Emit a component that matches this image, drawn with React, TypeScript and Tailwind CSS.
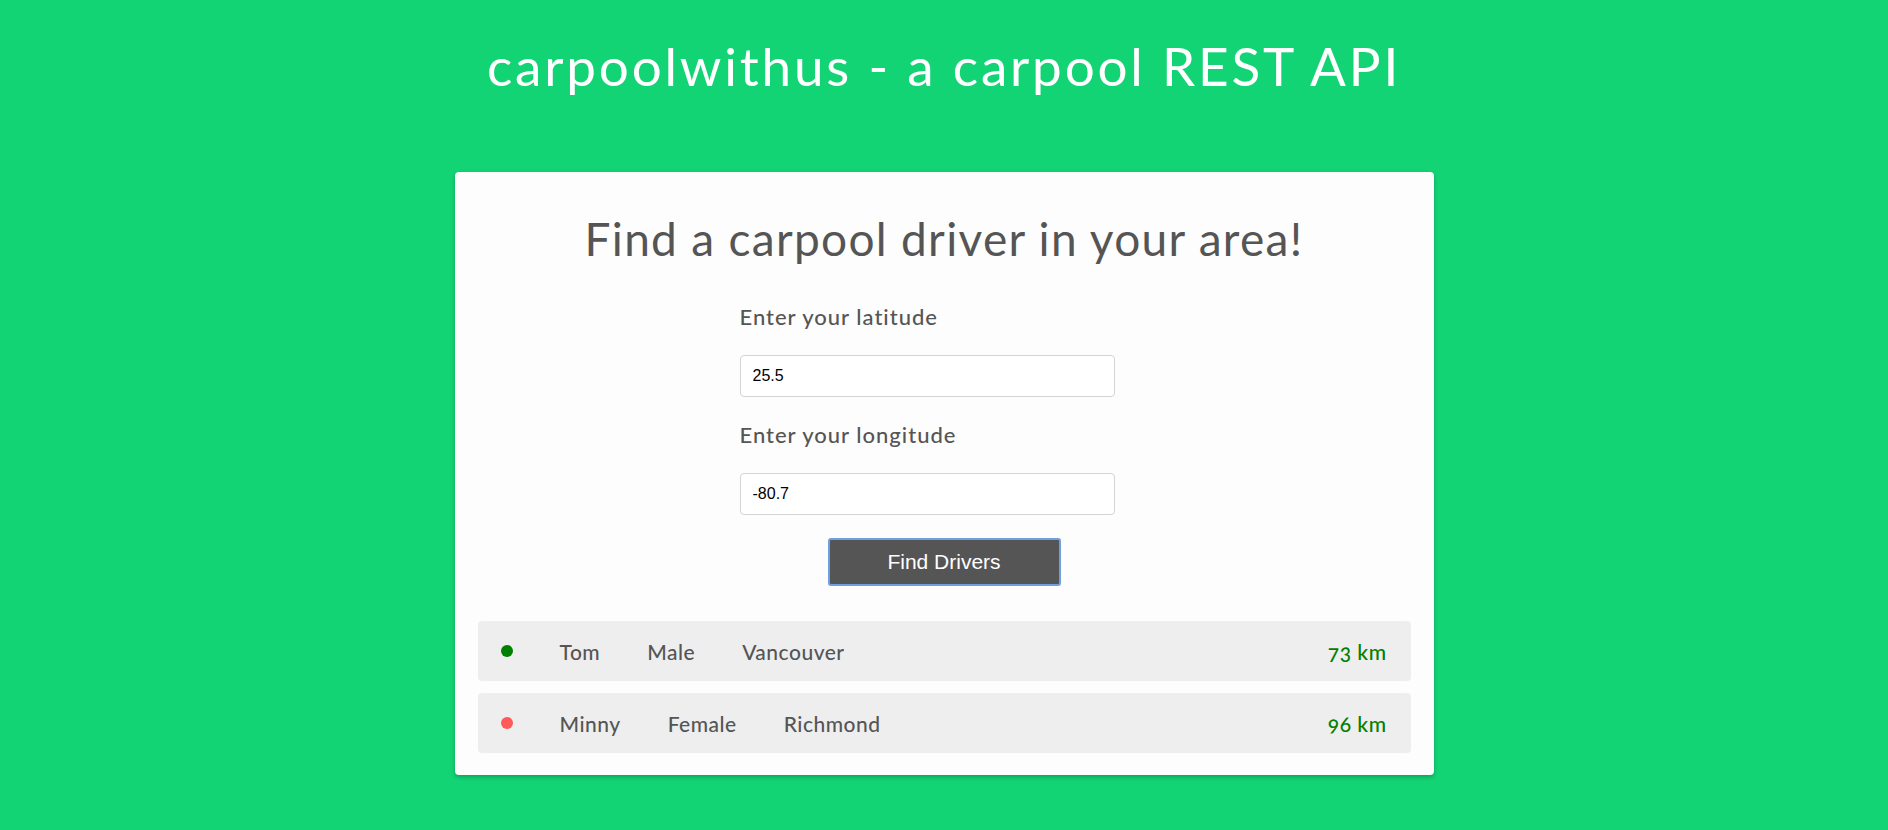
import React from "react";

type Driver = { name: string; gender: string; city: string; dist: string; active: boolean };

const drivers: Driver[] = [
  { name: "Tom", gender: "Male", city: "Vancouver", dist: "73 km", active: true },
  { name: "Minny", gender: "Female", city: "Richmond", dist: "96 km", active: false },
];

export default function App() {
  return (
    <div className="min-h-[830px] bg-[#13d474] pt-[40px] font-['Lato','Open_Sans',sans-serif]">
      <h1 className="text-center text-[53px] leading-[52px] font-normal tracking-[2.8px] text-white">
        carpoolwithus - a carpool REST API
      </h1>
      <div className="mx-auto mt-[80px] w-[979px] rounded-[4px] bg-[#fdfdfd] px-[23px] pt-[44px] pb-[22px] shadow-[0_2px_4px_rgba(0,0,0,0.25)]">
        <h2 className="text-center text-[46px] leading-[46px] font-normal tracking-[1.3px] text-[#555]">
          Find a carpool driver in your area!
        </h2>
        <div className="mx-auto mt-[44px] w-[409px]">
          <div className="text-[22px] leading-[22px] font-medium tracking-[1px] text-[#555]">Enter your latitude</div>
          <input
            readOnly
            value="25.5"
            className="mt-[27px] block h-[42px] w-[375px] rounded-[4px] border border-[#d4d4d4] bg-white px-[12px] font-['Liberation_Sans',Arial,sans-serif] text-[16px] text-black outline-none"
          />
          <div className="mt-[27px] text-[22px] leading-[22px] font-medium tracking-[1px] text-[#555]">Enter your longitude</div>
          <input
            readOnly
            value="-80.7"
            className="mt-[27px] block h-[42px] w-[375px] rounded-[4px] border border-[#d4d4d4] bg-white px-[12px] font-['Liberation_Sans',Arial,sans-serif] text-[16px] text-black outline-none"
          />
        </div>
        <div className="mt-[23px] flex justify-center">
          <button className="h-[48px] w-[233px] rounded-[3px] border-2 border-[#6f9fdf] bg-[#555555] font-['Liberation_Sans',Arial,sans-serif] text-[21px] text-white">
            Find Drivers
          </button>
        </div>
        <div className="mt-[35px] flex flex-col gap-[12px]">
          {drivers.map((d) => (
            <div
              key={d.name}
              className="flex h-[60px] items-center rounded-[4px] bg-[#eeeeee] pl-[23px] pr-[24px] text-[21px] leading-[25px] font-medium tracking-[0.5px] text-[#555]"
            >
              <span
                className={
                  d.active
                    ? "h-[12px] w-[12px] shrink-0 rounded-full bg-[#008000]"
                    : "h-[12px] w-[12px] shrink-0 rounded-full bg-[#ff5a5a]"
                }
              />
              <span className="ml-[47px]">{d.name}</span>
              <span className="ml-[47px]">{d.gender}</span>
              <span className="ml-[47px]">{d.city}</span>
              <span className="ml-auto text-[#008000] oldstyle-nums">{d.dist}</span>
            </div>
          ))}
        </div>
      </div>
    </div>
  );
}
